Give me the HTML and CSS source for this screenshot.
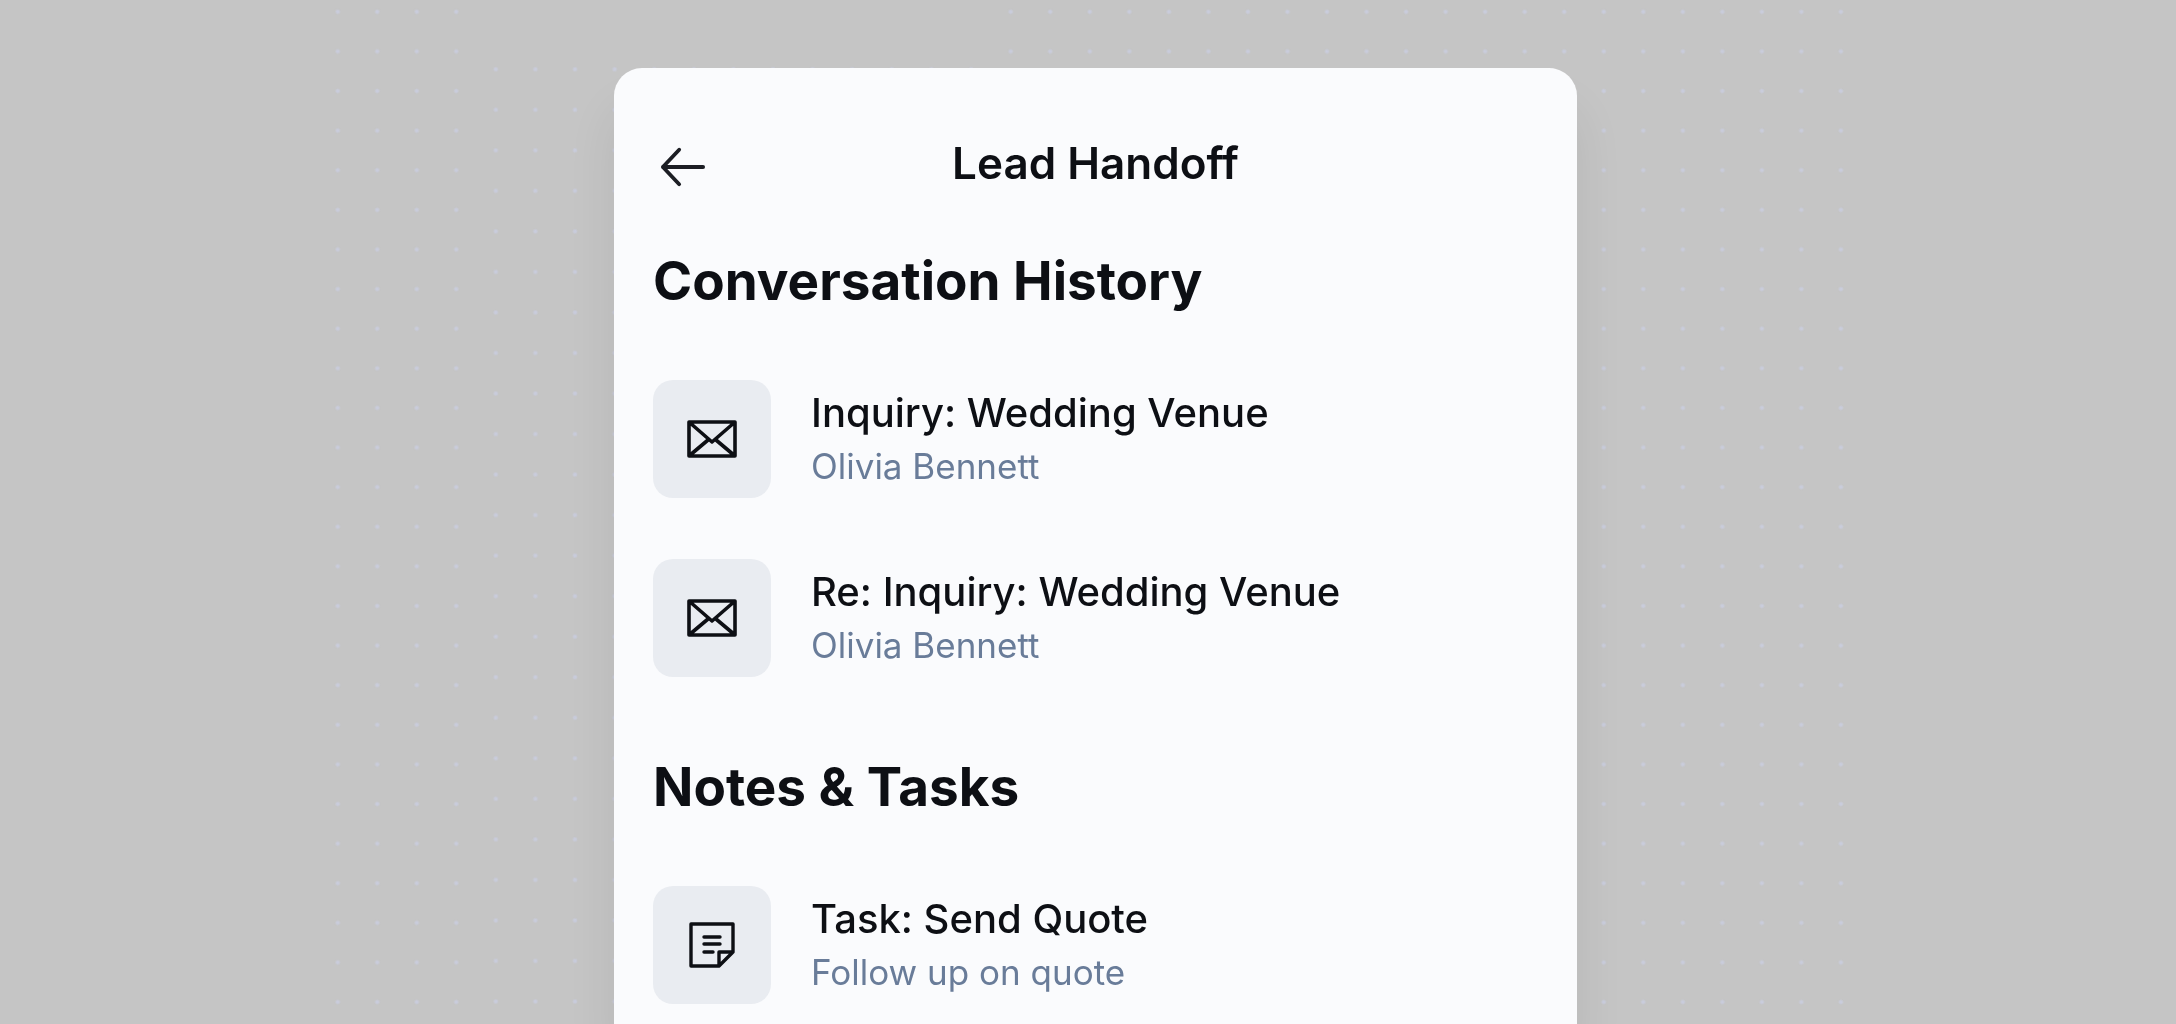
FILE: index.html
```
<!DOCTYPE html>
<html lang="en">
<head>
    <meta charset="UTF-8">
    <meta name="viewport" content="width=device-width, initial-scale=1.0">
    <title>Lead Handoff</title>
    <link rel="stylesheet" href="styles.css">
</head>
<body>

<div class="backdrop">
    <div class="dots dots-left"></div>
    <div class="dots dots-middle"></div>
    <div class="dots dots-right"></div>
</div>

<main class="card">
    <header class="card-header">
        <button type="button" class="back" aria-label="Back">
            <svg viewBox="0 0 48 48" fill="none" stroke="#1c1e24" stroke-width="4" stroke-linecap="round" stroke-linejoin="round">
                <path d="M45 25H3M20 7L3 25l17 18"/>
            </svg>
        </button>
        <h1>Lead Handoff</h1>
    </header>

    <section>
        <h2>Conversation History</h2>
        <ul class="list">
            <li class="item">
                <span class="tile">
                    <svg class="icon" viewBox="0 0 50 38" fill="none" stroke="#0d0f14" stroke-width="3.6" stroke-linejoin="round">
                        <path d="M2 2h46v34H2zM2 2l23 20L48 2M2 36l19-16M48 36L29 20"/>
                    </svg>
                </span>
                <div class="text">
                    <p class="title">Inquiry: Wedding Venue</p>
                    <p class="sub">Olivia Bennett</p>
                </div>
            </li>
            <li class="item">
                <span class="tile">
                    <svg class="icon" viewBox="0 0 50 38" fill="none" stroke="#0d0f14" stroke-width="3.6" stroke-linejoin="round">
                        <path d="M2 2h46v34H2zM2 2l23 20L48 2M2 36l19-16M48 36L29 20"/>
                    </svg>
                </span>
                <div class="text">
                    <p class="title">Re: Inquiry: Wedding Venue</p>
                    <p class="sub">Olivia Bennett</p>
                </div>
            </li>
        </ul>
    </section>

    <section>
        <h2>Notes &amp; Tasks</h2>
        <ul class="list">
            <li class="item">
                <span class="tile">
                    <svg class="icon" viewBox="0 0 50 46" fill="none" stroke="#0d0f14" stroke-width="3.4" stroke-linecap="round" stroke-linejoin="round">
                        <path d="M4 2h42v28L32 44H4zM46 30H32v14"/>
                        <path d="M17 15h16M17 22h16M17 30h9"/>
                    </svg>
                </span>
                <div class="text">
                    <p class="title">Task: Send Quote</p>
                    <p class="sub">Follow up on quote</p>
                </div>
            </li>
        </ul>
    </section>
</main>

</body>
</html>
```

FILE: styles.css
```
* {
    box-sizing: border-box;
}

body {
    font-family: Inter, "Liberation Sans", sans-serif;
    display: flex;
    flex-direction: column;
    align-items: center;
    margin: 0;
    padding: 68px 16px 0 31px;
    min-height: 100vh;
    background: #c5c5c5;
    color: #0d0f14;
}

h1, h2, p, ul {
    margin: 0;
    padding: 0;
}

/* dotted backdrop behind the card */
.backdrop {
    position: fixed;
    top: -8px;
    bottom: 2px;
    left: 50%;
    display: flex;
    width: 1543px;
    margin-left: -770px;
}

.dots {
    background: radial-gradient(circle, #c9ccdc 1px, transparent 3px) 0 0 / 40px 40px round;
}

.dots-left {
    width: 158px;
}

.dots-middle {
    width: 515px;
    margin-top: 57px;
}

.dots-right {
    flex: 1;
}

.card {
    position: relative;
    flex: 1;
    width: 100%;
    max-width: 963px;
    padding: 65px 39px 0;
    background: #fafbfd;
    border-radius: 28px 28px 0 0;
    box-shadow: 0 40px 50px rgba(0, 0, 0, 0.08);
}

.card-header {
    display: grid;
    grid-template-columns: 60px 1fr 60px;
    align-items: center;
    margin-bottom: 54px;
}

.back {
    padding: 6px 0 0 7px;
    border: none;
    background: none;
    cursor: pointer;
}

.back svg {
    display: block;
    width: 46px;
    height: 46px;
}

h1 {
    font-size: 44px;
    line-height: 60px;
    font-weight: 600;
    text-align: center;
}

h2 {
    font-size: 53px;
    line-height: 68px;
    font-weight: 700;
}

section + section {
    margin-top: 76px;
}

.list {
    list-style: none;
    padding-top: 65px;
}

.item {
    display: flex;
    align-items: center;
    gap: 40px;
}

.item + .item {
    margin-top: 61px;
}

.tile {
    display: flex;
    align-items: center;
    justify-content: center;
    width: 118px;
    height: 118px;
    border-radius: 20px;
    background: #e9ecf1;
}

.icon {
    width: 50px;
}

.text {
    padding-bottom: 6px;
}

.title {
    font-size: 40px;
    line-height: 60px;
    font-weight: 500;
}

.sub {
    font-size: 35px;
    line-height: 46px;
    color: #697c99;
}
```
